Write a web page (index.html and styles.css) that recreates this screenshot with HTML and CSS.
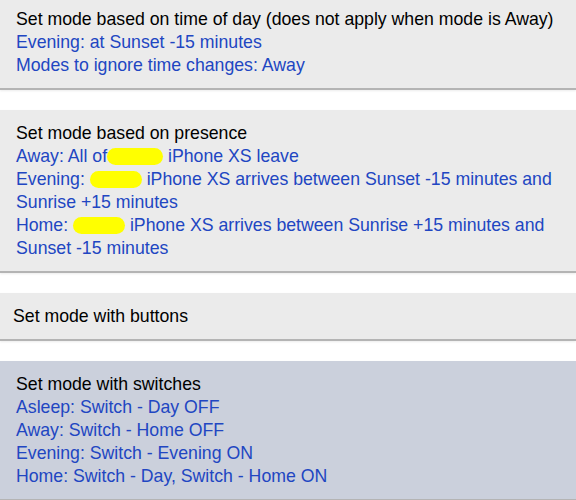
FILE: index.html
```html
<!DOCTYPE html>
<html lang="en">
<head>
    <meta charset="UTF-8">
    <meta name="viewport" content="width=device-width, initial-scale=1.0">
    <title>Mode Manager</title>
    <link rel="stylesheet" href="styles.css">
</head>
<body>
    <div class="section first">
        <div class="title">Set mode based on time of day (does not apply when mode is Away)</div>
        <div class="value">Evening: at Sunset -15 minutes</div>
        <div class="value">Modes to ignore time changes: Away</div>
    </div>

    <div class="section">
        <div class="title">Set mode based on presence</div>
        <div class="value">Away: All of<span class="blot wide"></span> iPhone XS leave</div>
        <div class="value">Evening: <span class="blot"></span> iPhone XS arrives between Sunset -15 minutes and Sunrise +15 minutes</div>
        <div class="value">Home: <span class="blot"></span> iPhone XS arrives between Sunrise +15 minutes and Sunset -15 minutes</div>
    </div>

    <div class="section button">
        <div class="title">Set mode with buttons</div>
    </div>

    <div class="section selected">
        <div class="title">Set mode with switches</div>
        <div class="value">Asleep: Switch - Day OFF</div>
        <div class="value">Away: Switch - Home OFF</div>
        <div class="value">Evening: Switch - Evening ON</div>
        <div class="value">Home: Switch - Day, Switch - Home ON</div>
    </div>
</body>
</html>
```

FILE: styles.css
```css
body {
    margin: 0;
    background-color: #ffffff;
    font-family: "Liberation Sans", Arial, sans-serif;
    font-size: 17.7px;
    line-height: 23px;
}
.section {
    background-color: #ebebeb;
    padding: 12px 16px 11px 16px;
    border-bottom: 2px solid #b4b4b4;
    box-shadow: 0 1px 2px rgba(0, 0, 0, 0.08);
    margin-bottom: 20px;
}
.section.first {
    padding-top: 8px;
}
.section.button {
    padding-left: 13px;
}
.section.selected {
    background-color: #cbd0dc;
}
.title {
    color: #000000;
}
.value {
    color: #2146c2;
}
.blot {
    display: inline-block;
    width: 52px;
    height: 17px;
    vertical-align: -3px;
    background-color: #ffff00;
    border-radius: 9px;
}
.blot.wide {
    width: 56px;
}
```
